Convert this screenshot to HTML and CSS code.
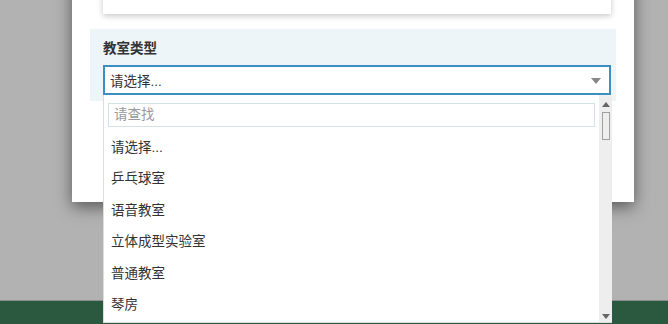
FILE: index.html
```html
<!DOCTYPE html>
<html lang="zh-CN">
<head>
  <meta charset="UTF-8" />
  <title>教室类型</title>
  <meta name="viewport" content="width=device-width, initial-scale=1" />
  <link rel="stylesheet" href="styles.css">
</head>
<body>
  <div class="page">
    <div class="page-main"></div>
    <footer class="site-footer"></footer>
  </div>

  <div class="modal">
    <div class="modal-body">
      <div class="card"></div>

      <div class="form-section">
        <label class="form-label">教室类型</label>
        <div class="select">
          <span class="select-text">请选择...</span>
          <span class="select-arrow"></span>
        </div>
      </div>
    </div>
  </div>

  <div class="dropdown">
    <div class="dropdown-content">
      <div class="search-box">请查找</div>
      <ul class="options">
        <li>请选择...</li>
        <li>乒乓球室</li>
        <li>语音教室</li>
        <li>立体成型实验室</li>
        <li>普通教室</li>
        <li>琴房</li>
      </ul>
    </div>
    <div class="scrollbar">
      <span class="scroll-up"></span>
      <span class="scroll-thumb"></span>
      <span class="scroll-space"></span>
      <span class="scroll-down"></span>
    </div>
  </div>
</body>
</html>
```

FILE: styles.css
```css
body {
  margin: 0;
  font-family: 'Liberation Sans', 'Noto Sans CJK SC', sans-serif;
  font-size: 13.5px;
  color: #333;
  background: #b2b2b2;
  overflow: hidden;
}
.page {
  height: 324px;
  display: flex;
  flex-direction: column;
}
.page-main {
  flex: 1;
}
.site-footer {
  height: 23px;
  background: #2a5940;
  border-top: 1px solid #8c8c8c;
}
.modal {
  position: absolute;
  left: 72px;
  top: -60px;
  width: 562px;
  height: 262px;
  background: #fff;
  box-shadow: 0 5px 15px rgba(0, 0, 0, 0.5);
}
.modal-body {
  padding: 20px 18px;
}
.card {
  height: 54px;
  margin: 0 5px 15px 13px;
  background: #fff;
  box-shadow: 0 2px 6px rgba(0, 0, 0, 0.22);
}
.form-section {
  background: #edf5f9;
  padding: 9px 5px 6px 13px;
}
.form-label {
  display: block;
  font-weight: bold;
  line-height: 21px;
  margin-bottom: 6px;
}
.select {
  height: 26px;
  border: 2px solid #3a8fc4;
  background: #fff;
  display: flex;
  align-items: center;
  justify-content: space-between;
  padding: 0 8px 0 5px;
}
.select-arrow {
  width: 0;
  height: 0;
  border-left: 5px solid transparent;
  border-right: 5px solid transparent;
  border-top: 6px solid #888;
  margin-top: 2px;
}
.dropdown {
  position: absolute;
  left: 103px;
  top: 95px;
  width: 508px;
  height: 227px;
  background: #fff;
  border-left: 1px solid #ddd;
  border-bottom: 1px solid #ddd;
  display: flex;
}
.dropdown-content {
  flex: 1;
  padding: 8px 4px 0 4px;
}
.search-box {
  height: 22px;
  line-height: 22px;
  border: 1px solid #d3e2e2;
  padding: 0 5px;
  color: #999;
}
.options {
  list-style: none;
  margin: 4px 0 0 0;
  padding: 0;
}
.options li {
  height: 31.4px;
  line-height: 33px;
  padding-left: 3px;
}
.scrollbar {
  width: 13px;
  background: #eee;
  display: flex;
  flex-direction: column;
  align-items: center;
}
.scroll-up {
  margin-top: 7px;
  border-left: 4px solid transparent;
  border-right: 4px solid transparent;
  border-bottom: 5px solid #666;
}
.scroll-thumb {
  margin-top: 5px;
  width: 6px;
  height: 26px;
  border: 1px solid #a0a0a0;
  background: #eee;
}
.scroll-space {
  flex: 1;
}
.scroll-down {
  margin-bottom: 3px;
  border-left: 4px solid transparent;
  border-right: 4px solid transparent;
  border-top: 5px solid #666;
}
```
